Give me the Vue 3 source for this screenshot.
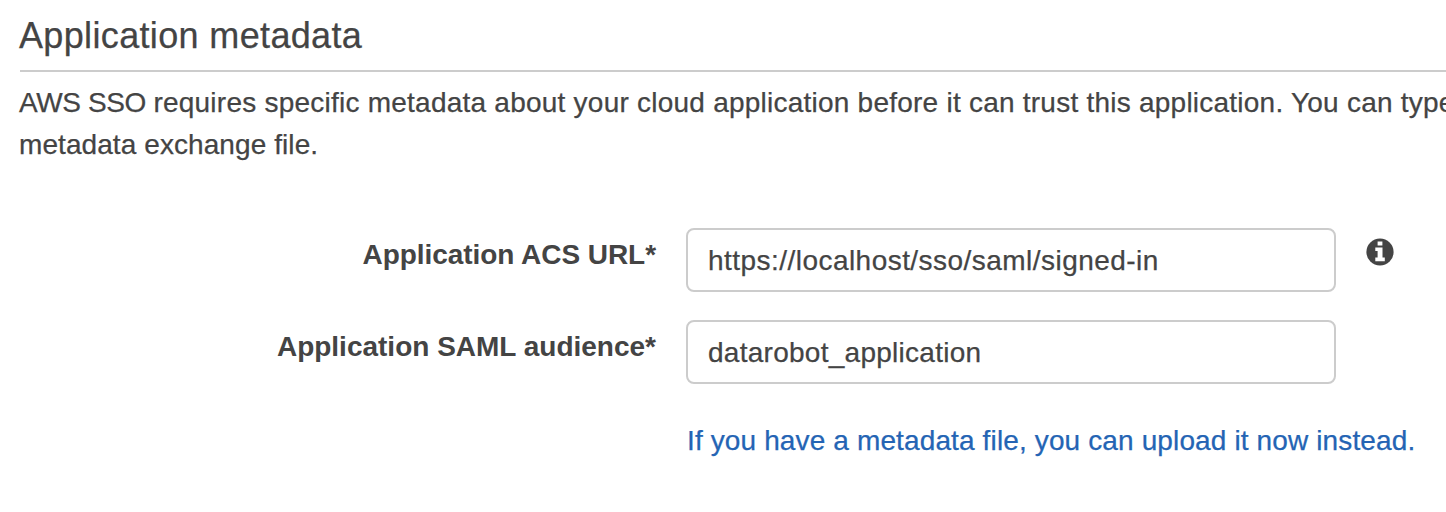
<script setup>
const fields = [
  { id: 'acs', label: 'Application ACS URL*', value: 'https://localhost/sso/saml/signed-in', info: true },
  { id: 'audience', label: 'Application SAML audience*', value: 'datarobot_application', info: false },
]
</script>

<template>
  <main class="panel">
    <h1>Application metadata</h1>
    <p class="intro">
      <span class="line first"><span class="product">AWS SSO </span>requires specific metadata about your cloud application before it can trust this application. You can type</span>
      <span class="line second">metadata exchange file.</span>
    </p>
    <form>
      <div v-for="field in fields" :key="field.id" class="row">
        <label :for="field.id" :class="field.id">{{ field.label }}</label>
        <div class="control"><span :id="field.id" class="value" :class="field.id">{{ field.value }}</span></div>
        <svg v-if="field.info" class="info" viewBox="0 0 28 28" aria-hidden="true">
          <circle cx="14" cy="14" r="13.6" fill="#444" />
          <path d="M11.6 3.4h4.8v4.1h-4.8zM9.3 9.4h7.2v10.1h2.3v3.7H9.3v-3.7h2.3v-6.4H9.3z" fill="#fff" />
        </svg>
      </div>
    </form>
    <a class="upload">If you have a metadata file, you can upload it now instead.</a>
  </main>
</template>

<style>
body { margin: 0; background: #fff; overflow: hidden; }
</style>
<style scoped>
.panel { box-sizing: border-box; width: 1446px; height: 512px; padding-left: 20px; overflow: hidden; color: #444; font-family: "Liberation Sans", Arial, sans-serif; font-size: 28px; white-space: nowrap; -webkit-text-stroke: 0.25px currentColor; }
h1 { box-sizing: border-box; height: 72px; margin: 0; padding-top: 15px; border-bottom: 2px solid #ccc; font-size: 36px; line-height: 42px; font-weight: 400; letter-spacing: 0.35px; text-indent: -1px; }
.intro { margin: 10px 0 0 -1px; line-height: 42px; height: 84px; }
.line { display: block; }
.first { letter-spacing: 0.235px; }
.product { letter-spacing: -0.38px; }
.second { letter-spacing: 0.08px; }
form { padding-top: 62px; }
.row { display: flex; height: 64px; margin-bottom: 28px; }
label { width: 636px; text-align: right; font-weight: 700; line-height: 54px; -webkit-text-stroke-width: 0; }
label.acs { letter-spacing: -0.05px; }
.control { box-sizing: border-box; width: 650px; margin-left: 30px; padding-left: 20px; border: 2px solid #ccc; border-radius: 8px; line-height: 62px; }
.value.acs { letter-spacing: 0.46px; }
.value.audience { letter-spacing: 0.27px; }
.info { width: 28px; height: 28px; margin: 10px 0 0 30px; }
.upload { display: block; margin: 36px 0 0 667px; color: #2464b4; line-height: 42px; letter-spacing: 0.13px; }
</style>
